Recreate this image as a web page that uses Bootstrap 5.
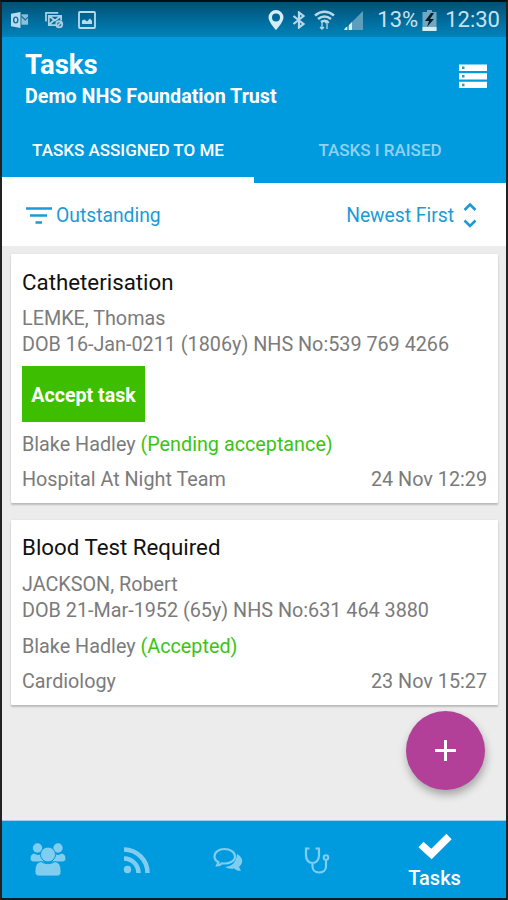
<!DOCTYPE html>
<html lang="en">
<head>
<meta charset="utf-8">
<meta name="viewport" content="width=device-width, initial-scale=1">
<title>Tasks</title>
<link rel="stylesheet" href="https://cdn.jsdelivr.net/npm/bootstrap@5.3.0/dist/css/bootstrap.min.css">
<style>
body{font-family:Roboto,"Noto Sans",sans-serif;font-size:19.77px;line-height:26.5px;background:#ececec;color:#7b7b7b}
svg{display:block;flex:none}
.phone{height:900px;border:2px solid #222;border-top-color:#001019;border-bottom-color:#001d2b;background:#ececec;overflow:hidden}
.blue{background:#009bde}
.statusbar{height:35px;background:linear-gradient(#015176,#0083bb);color:#c8e2ee;font-size:22px;padding:1px 6px 0 9px}
.pic-icon{margin-left:14px}
.pct{margin-left:14px}
.titlebar{height:84px;padding:11px 18px 0 23px}
.titlebar h1{font-size:27.5px;line-height:34px}
.titlebar h2{font-size:19.7px;line-height:29px}
.tabs{height:62px;font-size:17px}
.tabs a{border-bottom:6px solid transparent;padding-top:2px}
.tabs a.active{border-color:#fff}
.tabs a:not(.active){color:#8fd2f2}
.filters{height:63px;padding:2px 28px 0 24px;color:#1c9ad6;font-size:19.3px}
.filters span{padding-top:2px}
.list{padding:8px 8px 0 9px;height:575px;gap:17px}
.task{border-radius:1px;box-shadow:0 2px 2px rgba(0,0,0,.2),0 0 2px rgba(0,0,0,.08);padding:14.600px 11px 9px}
.task h3{font-size:22.3px;line-height:26px;margin-bottom:11.200px;color:#111}
.line-gap{margin-top:9px}
.accept{height:56px;width:123px;background:#3dbf00;border-radius:0;font-size:19.6px;line-height:26px;margin:7.2px 0 9.8px}
.ok{color:#39c512}
.fab{position:absolute;left:403.500px;top:708.500px;width:79px;height:79px;background:#b23f98;box-shadow:1px 5px 8px rgba(0,0,0,.3)}
.bottomnav{height:77px;padding-left:1px;box-shadow:0 -1px 0 #9fcfe8}
.bottomnav a{width:89.7px;color:#80cdf0}
.bottomnav a.current{width:148px;font-size:20px;line-height:24px}
</style>
</head>
<body>
<div class="phone d-flex flex-column position-relative">
  <div class="statusbar d-flex align-items-center justify-content-between">
    <div class="d-flex align-items-center">
      <svg width="18" height="18" viewBox="0 0 19 18" fill="#b9dcec"><path d="M0 2.500 10 .5v17L0 15.500z"/><path d="M11 3h7v11h-7z" opacity=".75"/><path d="M11 5l4 4 3-3" fill="none" stroke="#17719a" stroke-width="1.300"/><ellipse cx="5" cy="9" rx="2.200" ry="3" fill="none" stroke="#17719a" stroke-width="1.500"/></svg>
      <svg class="ms-3" width="19" height="17" viewBox="0 0 20 18" fill="none" stroke="#a6d0e3" stroke-width="1.900"><path d="M1 10V1h13"/><path d="M17 9V4H4v10h8M4 4l6.500 5L17 4M4 14l5-5"/><circle cx="15" cy="13" r="3.200"/><path d="M13 15l4-4"/></svg>
      <svg class="pic-icon" width="18" height="18" viewBox="0 0 18 18"><rect x="1" y="1" width="16" height="16" rx="1" fill="none" stroke="#b9dcec" stroke-width="1.800"/><path d="M4 13V9.500l2.500-1L9 10.500l3-3 2 2.500v3z" fill="#b9dcec"/></svg>
    </div>
    <div class="d-flex align-items-center">
      <svg width="16" height="20" viewBox="0 0 16 20"><path fill="#d4edf7" fill-rule="evenodd" d="M8 0a7.500 7.500 0 0 1 7.500 7.500C15.500 12 8 20 8 20S.5 12 .5 7.500A7.500 7.500 0 0 1 8 0zm0 3.500a4 4 0 1 0 0 8 4 4 0 0 0 0-8z"/></svg>
      <svg class="ms-2" width="14" height="18" viewBox="0 0 14 18" fill="none" stroke="#b5d9e8" stroke-width="2.200"><path d="M1.500 5l10 8L7 16.500v-15L11.500 5l-10 8"/></svg>
      <svg class="ms-2" width="21" height="20" viewBox="0 0 21 20" fill="none" stroke="#b5d9e8" stroke-width="2.600"><path d="M1 5.500Q10.500-2 20 5.500M4 9q6.500-5 13 0M7 12q3.500-2.500 7 0"/><path d="M8 11v8m-2-2 2 2 2-2M13 19v-8m-2 2 2-2 2 2" stroke-width="1.300"/></svg>
      <svg class="ms-2" width="20" height="20" viewBox="0 0 20 20"><path d="M1 20 20 1v19z" fill="#5b9fbd"/><path d="M1 20l2-3h1v3zM6 20v-5l3-3v8z" fill="#d4edf7"/></svg>
      <span class="pct">13%</span>
      <svg class="ms-1" width="15" height="21" viewBox="0 0 15 21"><path d="M5 0h5v2h4.500v19H.5V2H5z" fill="#6fa8bf"/><path d="M.5 17h14v4H.5z" fill="#d4edf7"/><path d="M9 3 3 11h4l-2 6 7-8H8l4-6z" fill="#001d2b"/></svg>
      <span class="ms-2">12:30</span>
    </div>
  </div>
  <header class="blue text-white">
    <div class="titlebar d-flex justify-content-between">
      <div>
        <h1 class="fw-bold mb-0">Tasks</h1>
        <h2 class="fw-bold mb-0">Demo NHS Foundation Trust</h2>
      </div>
      <svg class="mt-3" width="29" height="24" viewBox="0 0 29 24"><path d="M0 .5h28V7H0zM0 9.300h28v6.200H0zM0 17.800h28V24H0z" fill="#fff"/><path d="M3 2.500h2.500v2.500H3zM3 11h2.500v2.500H3zM3 19.700h2.500v2.500H3z" fill="#3a92bd"/></svg>
    </div>
    <nav class="tabs d-flex fw-medium">
      <a class="active w-50 d-flex align-items-center justify-content-center text-white text-decoration-none">TASKS ASSIGNED TO ME</a>
      <a class="w-50 d-flex align-items-center justify-content-center text-decoration-none">TASKS I RAISED</a>
    </nav>
  </header>
  <div class="filters bg-white d-flex justify-content-between align-items-center">
    <div class="d-flex align-items-center">
      <svg width="26" height="18" viewBox="0 0 26 18" stroke="#1c9ad6" stroke-width="2.600"><path d="M0 1.500h26M4 8.500h17M9.500 15.500h6.500"/></svg>
      <span class="ms-1">Outstanding</span>
    </div>
    <div class="d-flex align-items-center">
      <span>Newest First</span>
      <svg class="ms-2" width="16" height="26" viewBox="0 0 16 26" fill="none" stroke="#1c9ad6" stroke-width="2.600"><path d="M2.500 7 8 1.500 13.500 7M2.500 17.500 8 23l5.500-5.500"/></svg>
    </div>
  </div>
  <main class="list d-flex flex-column">
    <article class="task bg-white">
      <h3 class="fw-normal">Catheterisation</h3>
      <div>LEMKE, Thomas</div>
      <div>DOB 16-Jan-0211 (1806y) NHS No:539 769 4266</div>
      <button class="btn accept text-white fw-bold px-0 pt-2 pb-1 d-block">Accept task</button>
      <div>Blake Hadley <span class="ok">(Pending acceptance)</span></div>
      <div class="d-flex justify-content-between line-gap"><span>Hospital At Night Team</span><span>24 Nov 12:29</span></div>
    </article>
    <article class="task bg-white">
      <h3 class="fw-normal">Blood Test Required</h3>
      <div>JACKSON, Robert</div>
      <div>DOB 21-Mar-1952 (65y) NHS No:631 464 3880</div>
      <div class="line-gap">Blake Hadley <span class="ok">(Accepted)</span></div>
      <div class="d-flex justify-content-between line-gap"><span>Cardiology</span><span>23 Nov 15:27</span></div>
    </article>
  </main>
  <button class="fab btn rounded-circle border-0 p-0 d-flex align-items-center justify-content-center" aria-label="Add task">
    <svg width="21" height="21" viewBox="0 0 21 21" stroke="#fff" stroke-width="3"><path d="M10.500 0v21M0 10.500h21"/></svg>
  </button>
  <nav class="bottomnav blue d-flex mt-auto">
    <a class="d-flex align-items-center justify-content-center" aria-label="Teams">
      <svg width="36" height="34" viewBox="0 0 36 34" fill="currentColor"><circle cx="7.500" cy="5" r="4.700"/><circle cx="28" cy="5" r="4.700"/><path d="M4 10.500q4 2.500 7 .5 0 5 3 7.500H4q-3.500 0-3.500-3 0-4 3.500-5zM32 10.500q-4 2.500-7 .5 0 5-3 7.500h10q3.500 0 3.500-3 0-4-3.500-5z"/><circle cx="18" cy="11.500" r="7.500" stroke="#009bde" stroke-width="1"/><path d="M11 18.500q7 4.500 14 0 6 1 6 10 0 4.500-4 4.500H9q-4 0-4-4.500 0-9 6-10z" stroke="#009bde" stroke-width=".8"/></svg>
    </a>
    <a class="d-flex align-items-center justify-content-center" aria-label="Feed">
      <svg width="28" height="28" viewBox="0 0 28 28" fill="none" stroke="currentColor" stroke-width="5"><circle cx="4.500" cy="23.500" r="3.700" fill="currentColor" stroke="none"/><path d="M1 12.500A14.500 14.500 0 0 1 15.500 27M1 3.500A23.500 23.500 0 0 1 24.500 27" stroke-width="4.500"/></svg>
    </a>
    <a class="d-flex align-items-center justify-content-center ps-1" aria-label="Messages">
      <svg width="30" height="26" viewBox="0 0 30 26"><path d="M24 7c6 3 7 9 2 13l2 4q-4 0-7-2.500-6 1-9-1.500 11-1 12-13z" fill="currentColor"/><path d="M11.500 2C6 2 1.500 5 1.500 9.500c0 2.500 1.500 4.500 4 5.800L4 18.500q3 0 5-2.200c7 1 13-2 13-6.800C22 5 17 2 11.500 2z" fill="#009bde" stroke="currentColor" stroke-width="2.200"/></svg>
    </a>
    <a class="d-flex align-items-center justify-content-center ps-1" aria-label="Clinical">
      <svg width="26" height="28" viewBox="0 0 26 28" fill="none" stroke="currentColor" stroke-width="2.200"><path d="M5.500 2.500H2v7C2 14 5 17 8.500 17S15 14 15 9.500v-7h-3.500M8.500 17v3.500c0 3.500 2.500 6 6.500 6s7-2.500 7-6V14"/><circle cx="22" cy="11.500" r="2.300" stroke-width="2"/></svg>
    </a>
    <a class="current text-white text-decoration-none d-flex flex-column align-items-center fw-medium pt-2 ps-1">
      <svg width="34" height="33" viewBox="0 0 34 33"><path d="M3 15.500l10.500 9.500L31 7.500" fill="none" stroke="#fff" stroke-width="7.500"/></svg>
      <span class="mt-1">Tasks</span>
    </a>
  </nav>
</div>
<script src="https://cdn.jsdelivr.net/npm/bootstrap@5.3.0/dist/js/bootstrap.bundle.min.js"></script>
</body>
</html>
